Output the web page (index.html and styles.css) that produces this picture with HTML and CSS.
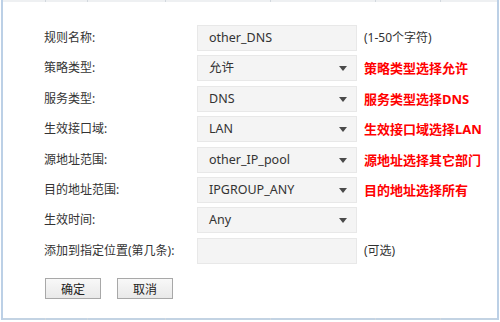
FILE: index.html
```html
<!DOCTYPE html>
<html lang="zh-CN">

<head>
    <meta charset="UTF-8">
    <title>规则设置</title>
    <link rel="stylesheet" href="styles.css">
</head>

<body>

    <div class="panel">
        <div class="ruler">
            <span class="c1"></span><span class="c2"></span><span class="c3"></span><span class="c4"></span><span class="c5"></span><span class="c6"></span><span class="c7"></span>
        </div>

        <form class="rule-form">
            <div class="row">
                <label>规则名称:</label>
                <div class="field">other_DNS</div>
                <span class="tip">(1-50个字符)</span>
            </div>
            <div class="row">
                <label>策略类型:</label>
                <div class="field select">允许</div>
                <span class="note">策略类型选择允许</span>
            </div>
            <div class="row">
                <label>服务类型:</label>
                <div class="field select">DNS</div>
                <span class="note">服务类型选择DNS</span>
            </div>
            <div class="row">
                <label>生效接口域:</label>
                <div class="field select">LAN</div>
                <span class="note">生效接口域选择LAN</span>
            </div>
            <div class="row">
                <label>源地址范围:</label>
                <div class="field select">other_IP_pool</div>
                <span class="note">源地址选择其它部门</span>
            </div>
            <div class="row">
                <label>目的地址范围:</label>
                <div class="field select">IPGROUP_ANY</div>
                <span class="note">目的地址选择所有</span>
            </div>
            <div class="row">
                <label>生效时间:</label>
                <div class="field select">Any</div>
                <span></span>
            </div>
            <div class="row">
                <label>添加到指定位置(第几条):</label>
                <div class="field"></div>
                <span class="tip">(可选)</span>
            </div>

            <div class="buttons">
                <button type="button">确定</button>
                <button type="button">取消</button>
            </div>
        </form>

        <div class="ruler bottom">
            <span class="c1"></span><span class="c2"></span><span class="c3"></span><span class="c4"></span><span class="c5"></span><span class="c6"></span><span class="c7"></span>
        </div>
    </div>

</body>

</html>
```

FILE: styles.css
```css
html,
body {
    margin: 0;
    background: #ffffff;
    font-family: "Noto Sans", "Noto Sans CJK SC", sans-serif;
    font-size: 12px;
    color: #333;
}

.panel {
    box-sizing: border-box;
    width: 498px;
    height: 320px;
    margin-left: 1px;
    border-left: 2px solid #bcd0e6;
    border-right: 2px solid #bcd0e6;
    display: flex;
    flex-direction: column;
}

.ruler {
    display: flex;
    height: 2px;
    background: #eef0f2;
}

.ruler.bottom {
    margin-top: auto;
    background: #c3d3e3;
}

.ruler span {
    border-right: 1px solid #d2d8de;
}

.c1 { width: 42px; }
.c2 { width: 41px; }
.c3 { width: 77px; }
.c4 { width: 104px; }
.c5 { width: 104px; }
.c6 { width: 64px; }
.c7 { flex: 1; border-right: none !important; }

.rule-form {
    padding: 23px 0 0 41px;
    display: grid;
    grid-template-columns: 153px 160px auto;
    row-gap: 4.4px;
}

.row {
    display: contents;
}

label {
    height: 26px;
    line-height: 26px;
    color: #333;
    white-space: nowrap;
}

.field {
    position: relative;
    box-sizing: border-box;
    height: 26px;
    line-height: 24px;
    padding-left: 11px;
    background: #f4f4f4;
    border: 1px solid #e8e8e8;
    color: #333;
    font-size: 12.5px;
}

.select::after {
    content: "";
    position: absolute;
    right: 9px;
    top: 10px;
    border-left: 4px solid transparent;
    border-right: 4px solid transparent;
    border-top: 5px solid #4a4a4a;
}

.tip,
.note {
    line-height: 26px;
    padding-left: 7px;
    white-space: nowrap;
}

.tip {
    color: #333;
}

.note {
    color: #ff0000;
    font-size: 13px;
    font-weight: bold;
}

.buttons {
    grid-column: 1 / 4;
    margin-top: 10px;
    display: flex;
    gap: 16px;
    padding-left: 1px;
}

button {
    width: 56px;
    height: 21px;
    padding: 0;
    border: 1px solid #a8a8a8;
    background: linear-gradient(#f8f8f8, #e9e9e9);
    font-family: "Noto Sans CJK SC", sans-serif;
    font-size: 12px;
    color: #222;
    cursor: pointer;
}
```
